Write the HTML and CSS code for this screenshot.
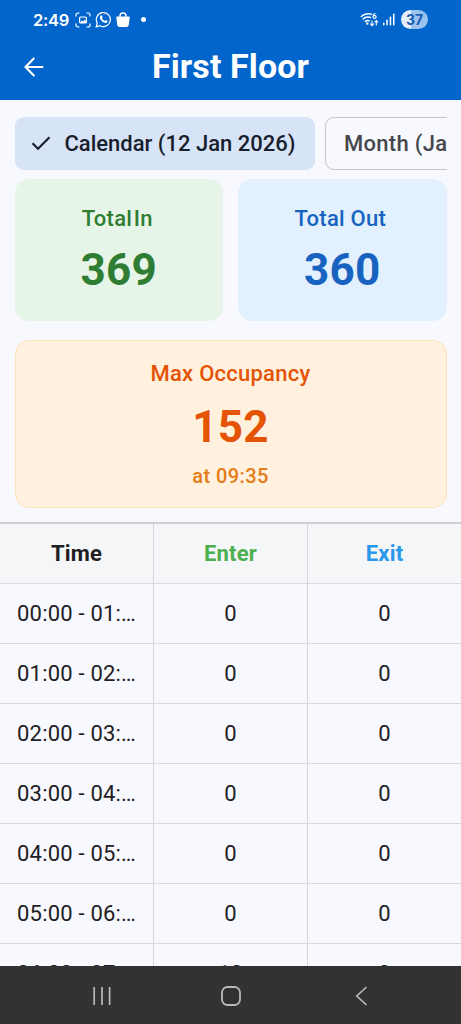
FILE: index.html
```html
<!DOCTYPE html>
<html lang="en">
<head>
<meta charset="utf-8">
<title>First Floor</title>
<link rel="stylesheet" href="styles.css">
</head>
<body>
<div class="screen">
  <header class="top">
    <div class="status">
      <span class="clock">2:49</span>
      <svg class="ic-shot" width="16" height="16" viewBox="0 0 16 16" fill="none" stroke="#fff" stroke-width="1.2"><path d="M1 4.500V3a2 2 0 0 1 2-2h1.500M11.500 1H13a2 2 0 0 1 2 2v1.500M15 11.500V13a2 2 0 0 1-2 2h-1.500M4.500 15H3a2 2 0 0 1-2-2v-1.500"/><rect x="4.600" y="5" width="6.800" height="6" rx="1"/><path d="M5 10.500l2-2 1.300 1 1.500-2 1.500 2v1.500H5z" fill="#fff" stroke="none"/></svg>
      <svg class="ic-wa" width="17" height="17" viewBox="0 0 17 17" fill="none" stroke="#fff" stroke-width="1.200"><path d="M1.200 15.800l1-3.800a7 7 0 1 1 2.700 2.700z"/><path d="M5.700 4.700c.4-.5 1.100-.4 1.300 0l.6 1.400c.1.400-.6.900-.6 1.200.5 1.200 1.500 2.100 2.700 2.600.4 0 .8-.9 1.200-.8l1.400.7c.4.3.2 1.200-.3 1.600-.8.700-2 .6-3.200 0-1.800-.8-3.100-2.200-3.700-3.700-.4-1.100-.2-2.300.6-3z" fill="#fff" stroke="none"/></svg>
      <svg class="ic-bag" width="14" height="16" viewBox="0 0 14 16"><path d="M4 6V4a3 3 0 0 1 6 0v2" fill="none" stroke="#fff" stroke-width="1.400"/><path d="M1.300 4.500h11.400q1.100 0 1 1l-.9 7.300q-.3 2.200-2.400 2.200H3.600q-2.100 0-2.400-2.200L.3 5.500q-.1-1 1-1z" fill="#fff"/></svg>
      <span class="dot"></span>
      <svg class="ic-wifi" width="19" height="16" viewBox="0 0 19 16" fill="none" stroke="#fff" stroke-width="1.500"><path d="M.8 4.700Q6 .2 12 2.400M2.700 7.200Q6.500 4 11 5.700M4.800 9.600Q7.200 7.800 9.700 9"/><circle cx="7.300" cy="11.500" r="1.200" fill="#fff" stroke="none"/><path d="M15.300 1.300Q13 2.300 13 4.500" stroke-width="1.200"/><circle cx="14.600" cy="4.900" r="1.500" stroke-width="1.200"/><path d="M12 8.500v5M10.200 11.700l1.800 1.900 1.800-1.900M16.300 13.500v-5M14.500 10.400l1.800-1.900 1.800 1.900" stroke-width="1.100"/></svg>
      <svg class="ic-cell" width="12" height="13" viewBox="0 0 12 13" fill="#fff"><rect x="0" y="9.500" width="1.500" height="3" rx=".7"/><rect x="3.300" y="6.500" width="1.500" height="6" rx=".7"/><rect x="6.700" y="3.500" width="1.500" height="9" rx=".7"/><rect x="10" y=".5" width="1.500" height="12" rx=".7"/></svg>
      <span class="battery">37</span>
    </div>
    <div class="appbar">
      <svg class="back" width="20" height="20" viewBox="0 0 20 20" fill="none" stroke="#fff" stroke-width="2.100"><path d="M19.300 10H2M10.300 1L1.500 10l8.800 9"/></svg>
      <h1>First Floor</h1>
    </div>
  </header>

  <main class="content">
    <div class="chips">
      <div class="chip selected">
        <svg width="20" height="16" viewBox="0 0 20 16" fill="none" stroke="#17202c" stroke-width="2.200"><path d="M1.500 7.300l5.500 5.500L18.500 1.300"/></svg>
        <span>Calendar (12 Jan 2026)</span>
      </div>
      <div class="chip outline"><span>Month (Jan 2026)</span></div>
    </div>
    <div class="cards">
      <section class="card in"><div class="label">Total In</div><div class="value">369</div></section>
      <section class="card out"><div class="label">Total Out</div><div class="value">360</div></section>
    </div>
    <section class="card max"><div class="label">Max Occupancy</div><div class="value">152</div><div class="at">at 09:35</div></section>
  </main>

  <div class="table">
    <div class="row head"><div>Time</div><div class="enter">Enter</div><div class="exit">Exit</div></div>
    <div class="row"><div>00:00 - 01:…</div><div>0</div><div>0</div></div>
    <div class="row"><div>01:00 - 02:…</div><div>0</div><div>0</div></div>
    <div class="row"><div>02:00 - 03:…</div><div>0</div><div>0</div></div>
    <div class="row"><div>03:00 - 04:…</div><div>0</div><div>0</div></div>
    <div class="row"><div>04:00 - 05:…</div><div>0</div><div>0</div></div>
    <div class="row"><div>05:00 - 06:…</div><div>0</div><div>0</div></div>
    <div class="row"><div>06:00 - 07:…</div><div>10</div><div>0</div></div>
  </div>

  <nav class="nav">
    <svg width="20" height="20" viewBox="0 0 20 20" stroke="#b9b9b9" stroke-width="1.700"><path d="M2.200 1v18M10 1v18M17.600 1v18"/></svg>
    <svg width="20" height="20" viewBox="0 0 20 20" fill="none" stroke="#b9b9b9" stroke-width="1.800"><rect x="1" y="1" width="18" height="18" rx="5.500"/></svg>
    <svg width="20" height="20" viewBox="0 0 20 20" fill="none" stroke="#b9b9b9" stroke-width="1.700"><path d="M15.500 1L5.800 10l9.700 9"/></svg>
  </nav>
</div>
</body>
</html>
```
FILE: styles.css
```css
* { box-sizing: border-box; }
body { margin: 0; background: #f8f9fe; font-family: Roboto, "Liberation Sans", sans-serif; color: #1e2024; }
.screen { width: 461px; height: 1024px; display: flex; flex-direction: column; overflow: hidden; }
svg { display: block; flex: none; }

.top { flex: none; height: 100px; background: #0165cc; color: #fff; }
.status { height: 39px; padding: 0 33px; display: flex; align-items: center; }
.clock { width: 36px; font: 600 16.500px Inter, sans-serif; letter-spacing: -0.300px; white-space: nowrap; }
.ic-shot { margin-left: 6px; }
.ic-wa { margin-left: 4px; }
.ic-bag { margin-left: 4px; }
.dot { width: 5px; height: 5px; margin-left: 11px; border-radius: 50%; background: #fff; }
.ic-wifi { margin-left: auto; }
.ic-cell { margin-left: 4px; }
.battery { width: 27px; height: 19px; margin-left: 6px; border-radius: 10px; background: linear-gradient(90deg, #e4effa 37%, #9cc3ee 37%); color: #1c5eb4; font: 700 14px/19px Inter, sans-serif; text-align: center; }
.appbar { height: 55px; padding: 0 24px; display: grid; grid-template-columns: 20px 1fr 20px; align-items: center; }
.appbar h1 { margin: 0; font-size: 34px; line-height: 42px; padding-bottom: 1px; font-weight: 700; letter-spacing: 0.100px; text-align: center; white-space: nowrap; }

.content { flex: none; height: 422px; padding: 17px 14.500px 0; }
.chips { width: 432px; height: 53px; display: flex; gap: 10px; overflow: hidden; }
.chip { flex: none; height: 53px; display: flex; align-items: center; border-radius: 9px; font-size: 22px; font-weight: 500; white-space: nowrap; }
.selected { width: 300.500px; padding-left: 16px; gap: 14px; background: #d7e3f7; color: #17202c; }
.outline { padding: 0 18px; border: 1px solid #c3c5cb; color: #45474c; letter-spacing: 0.300px; }
.cards { margin-top: 9px; display: grid; grid-template-columns: 1fr 1fr; gap: 15px; }
.card { height: 142px; padding-top: 27px; border-radius: 14px; text-align: center; }
.label { font-size: 22px; line-height: 26px; font-weight: 500; letter-spacing: 0.250px; }
.value { font-size: 44px; line-height: 52px; font-weight: 700; letter-spacing: 0.200px; margin-top: 12px; }
.in { background: #e7f5e8; color: #2f7d33; padding-right: 3px; }
.in .label { word-spacing: -4px; }
.in .value { padding-left: 3px; }
.out { background: #e2f1fd; color: #1863c0; }
.out .label { padding-right: 4px; }
.max { height: 168px; margin-top: 19px; padding-top: 20px; border: 1px solid #fbe2bd; background: #fff1de; color: #e55304; }
.max .value { margin-top: 14px; }
.at { margin-top: 10px; font-size: 20px; line-height: 26px; font-weight: 500; color: #e67c17; letter-spacing: 0.400px; }

.table { flex: 1; min-height: 0; overflow: hidden; border-top: 2px solid #ced0d3; }
.row { height: 60px; display: grid; grid-template-columns: 154px 154px 153px; border-bottom: 1px solid #d8dae0; font-size: 22px; line-height: 59px; text-align: center; letter-spacing: 0.200px; }
.row > div { border-right: 1px solid #d4d6db; white-space: nowrap; }
.row > div:last-child { border-right: 0; }
.head { background: #f5f6f8; font-weight: 700; }
.enter { color: #4caf50; }
.exit { color: #2b98ee; }

.nav { flex: none; height: 58px; padding: 1px 35px 0 37px; display: grid; grid-template-columns: repeat(3, 1fr); place-items: center; background: #323232; }
```
